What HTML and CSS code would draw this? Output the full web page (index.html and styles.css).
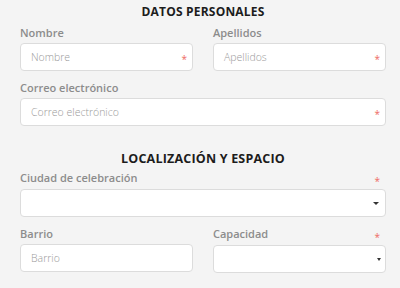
FILE: index.html
```html
<!DOCTYPE html>
<html lang="es">
<head>
<meta charset="utf-8">
<link rel="stylesheet" href="styles.css">
</head>
<body>
<form class="form">
  <h2 class="section-title first">DATOS PERSONALES</h2>
  <div class="row two">
    <div class="field">
      <label class="label">Nombre</label>
      <div class="control"><span class="ph">Nombre</span><span class="req">*</span></div>
    </div>
    <div class="field">
      <label class="label">Apellidos</label>
      <div class="control"><span class="ph">Apellidos</span><span class="req">*</span></div>
    </div>
  </div>
  <div class="row">
    <div class="field">
      <label class="label">Correo electrónico</label>
      <div class="control"><span class="ph">Correo electrónico</span><span class="req">*</span></div>
    </div>
  </div>

  <h2 class="section-title second">LOCALIZACIÓN Y ESPACIO</h2>
  <div class="row">
    <div class="field">
      <div class="label-row"><label class="label">Ciudad de celebración</label><span class="req">*</span></div>
      <div class="control select"><span class="ph"></span><span class="arrow big"></span></div>
    </div>
  </div>
  <div class="row two">
    <div class="field">
      <label class="label">Barrio</label>
      <div class="control"><span class="ph">Barrio</span></div>
    </div>
    <div class="field">
      <div class="label-row"><label class="label">Capacidad</label><span class="req">*</span></div>
      <div class="control select"><span class="ph"></span><span class="arrow small"></span></div>
    </div>
  </div>
</form>
</body>
</html>
```
FILE: styles.css
```css
html, body {
  margin: 0;
  padding: 0;
  background: #f4f4f4;
}
body {
  font-family: "Open Sans", "Liberation Sans", sans-serif;
  width: 400px;
  height: 288px;
  overflow: hidden;
}
.form {
  padding: 0 14px 0 20px;
}
.section-title {
  margin: 0;
  text-align: center;
  font-weight: 700;
  color: #1c1c1c;
  letter-spacing: 0.2px;
}
.section-title.first {
  font-size: 12px;
  line-height: 16px;
  padding-top: 4px;
}
.section-title.second {
  font-size: 12.5px;
  line-height: 18px;
  margin-top: 24px;
}
.row {
  display: grid;
  grid-template-columns: 1fr;
  column-gap: 20px;
  margin-top: 10px;
}
.row.two {
  grid-template-columns: 1fr 1fr;
}
.section-title.first + .row { margin-top: 6px; }
.section-title.second + .row { margin-top: 3px; }
.field {
  display: flex;
  flex-direction: column;
}
.label-row {
  display: flex;
  justify-content: space-between;
  align-items: center;
  padding-right: 6px;
}
.label {
  font-size: 11px;
  line-height: 14px;
  font-weight: 600;
  color: #8c8c8c;
  margin-bottom: 3px;
}
.label-row .label { margin-bottom: 4px; }
.label-row .req { margin-bottom: 2px; }
.control {
  height: 28px;
  box-sizing: border-box;
  background: #fff;
  border: 1px solid #dcdcdc;
  border-radius: 4px;
  display: flex;
  align-items: center;
  justify-content: space-between;
  padding: 0 5px 0 10px;
}
.ph {
  font-size: 10.5px;
  font-weight: 300;
  color: #9a9a9a;
}
.req {
  color: #ee6b63;
  font-size: 10px;
  line-height: 10px;
  height: 7px;
}
.arrow {
  width: 0;
  height: 0;
  border-left-style: solid;
  border-right-style: solid;
  border-top-style: solid;
  border-left-color: transparent;
  border-right-color: transparent;
  border-top-color: #333;
}
.arrow.big {
  border-width: 3px 3px 0 3px;
  margin-right: 1px;
}
.arrow.small {
  border-width: 3px 2px 0 2px;
  margin-right: -1px;
}
```
